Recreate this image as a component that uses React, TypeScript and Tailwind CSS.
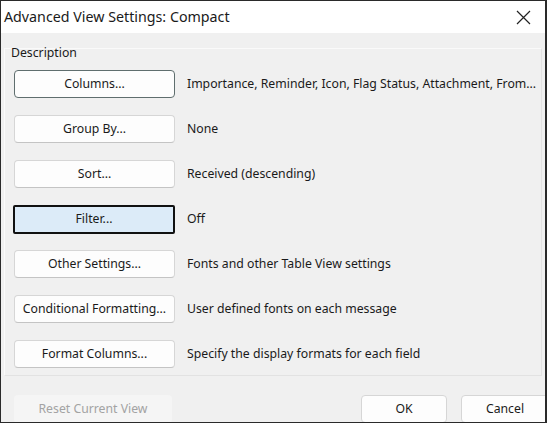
type Row = {
  label: string
  value: string
  kind?: "default" | "focused"
}

const rows: Row[] = [
  { label: "Columns...", value: "Importance, Reminder, Icon, Flag Status, Attachment, From...", kind: "default" },
  { label: "Group By...", value: "None" },
  { label: "Sort...", value: "Received (descending)" },
  { label: "Filter...", value: "Off", kind: "focused" },
  { label: "Other Settings...", value: "Fonts and other Table View settings" },
  { label: "Conditional Formatting...", value: "User defined fonts on each message" },
  { label: "Format Columns...", value: "Specify the display formats for each field" },
]

function RowButton({ label, kind }: { label: string; kind?: Row["kind"] }) {
  if (kind === "focused") {
    return (
      <button className="ml-[8px] flex h-[29px] w-[162px] items-center justify-center rounded-[2px] border-2 border-[#111] bg-[#dcebf8] text-[12.25px] text-[#1a1a1a]">
        {label}
      </button>
    )
  }
  return (
    <button
      className={`ml-[9px] flex h-[28px] w-[161px] items-center justify-center rounded-[4px] border bg-[#fdfdfd] text-[12.25px] text-[#1a1a1a] ${
        kind === "default" ? "border-[#5f6e6e]" : "border-[#d6d6d6] border-b-[#c4c4c4]"
      }`}
    >
      {label}
    </button>
  )
}

export default function App() {
  return (
    <div
      className="flex h-[423px] w-[547px] flex-col overflow-hidden border border-r-2 border-[#2a2a2a] bg-[#f0f0f0] text-[#1a1a1a]"
      style={{ fontFamily: '"Noto Sans", "Open Sans", sans-serif' }}
    >
      <div className="flex h-[32px] shrink-0 items-center justify-between bg-white pl-[3px] pr-[14px]">
        <span className="text-[14.25px]">Advanced View Settings: Compact</span>
        <svg width="15" height="15" viewBox="0 0 15 15" className="text-[#222]">
          <path d="M1 1L14 14M14 1L1 14" stroke="currentColor" strokeWidth="1.2" fill="none" />
        </svg>
      </div>

      <div className="mx-[3px] mt-[15px] flex flex-col border-x border-t border-b border-[#e2e2e2] border-l-[#fafafa] border-t-[#fafafa] pb-[7px]">
        <span className="-mt-[5px] ml-[6px] text-[12.25px] leading-[17px]">Description</span>
        <div className="mt-[9px] flex flex-col gap-[17px]">
          {rows.map((row) => (
            <div key={row.label} className="flex h-[28px] items-center">
              <RowButton label={row.label} kind={row.kind} />
              <span className="ml-[12px] whitespace-nowrap text-[12.25px]">{row.value}</span>
            </div>
          ))}
        </div>
      </div>

      <div className="mt-[19px] flex items-start">
        <button
          disabled
          className="ml-[13px] flex h-[28px] w-[158px] items-center justify-center rounded-[4px] bg-[#f5f5f5] text-[12.25px] text-[#a3a3a3]"
        >
          Reset Current View
        </button>
        <button className="ml-auto flex h-[28px] w-[86px] items-center justify-center rounded-[4px] border border-[#d6d6d6] bg-[#fdfdfd] text-[12.25px]">
          OK
        </button>
        <button className="ml-[14px] -mr-[4px] flex h-[28px] w-[88px] items-center justify-center rounded-[4px] border border-[#d6d6d6] bg-[#fdfdfd] text-[12.25px]">
          Cancel
        </button>
      </div>
    </div>
  )
}
